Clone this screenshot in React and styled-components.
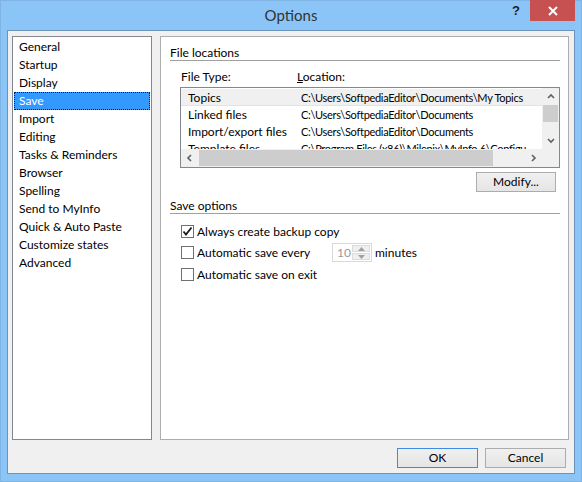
import React, { useState } from 'react';
import styled, { createGlobalStyle } from 'styled-components';

const GlobalStyle = createGlobalStyle`
    html, body {
        margin: 0;
        padding: 0;
        background: #8bc5f8;
    }
    body {
        font-family: "Segoe UI", Lato, "Liberation Sans", Arial, sans-serif;
        font-size: 12px;
        color: #000;
    }
`;

const Window = styled.div`
    width: 582px;
    height: 482px;
    box-sizing: border-box;
    background: #8bc5f8;
    border: 1px solid #7fb4e4;
    padding: 0 6px 7px 6px;
    display: flex;
    flex-direction: column;
`;

const TitleBar = styled.div`
    height: 29px;
    display: grid;
    grid-template-columns: 1fr auto 1fr;
    align-items: start;
`;

const Title = styled.div`
    grid-column: 2;
    font-size: 15px;
    color: #333;
    padding-top: 5px;
`;

const TitleButtons = styled.div`
    grid-column: 3;
    justify-self: end;
    display: flex;
    align-items: flex-start;
    margin-top: -1px;
`;

const HelpButton = styled.div`
    width: 28px;
    height: 20px;
    display: flex;
    align-items: center;
    justify-content: center;
    font-family: "Liberation Sans", Arial, sans-serif;
    font-weight: bold;
    font-size: 13px;
    color: #222;
`;

const CloseButton = styled.div`
    width: 45px;
    height: 21px;
    background: #c75050;
    display: flex;
    align-items: center;
    justify-content: center;
`;

const Client = styled.div`
    flex: 1;
    background: #f0f0f0;
    border: 1px solid #6d93bb;
    padding: 5px 5px 5px 4px;
    display: flex;
    flex-direction: column;
`;

const Body = styled.div`
    flex: 1;
    display: flex;
    gap: 8px;
`;

const NavList = styled.ul`
    list-style: none;
    margin: 0;
    width: 140px;
    box-sizing: border-box;
    background: #fff;
    border: 1px solid #828790;
    padding: 1px 1px 0 1px;
`;

const NavItem = styled.li`
    height: 18px;
    box-sizing: border-box;
    padding-left: 4px;
    line-height: 16px;
    border: 1px dotted ${(p) => (p.$active ? '#1a1a1a' : 'transparent')};
    background: ${(p) => (p.$active ? '#3399ff' : 'transparent')};
    color: ${(p) => (p.$active ? '#fff' : '#000')};
    cursor: default;
`;

const Panel = styled.div`
    flex: 1;
    background: #fff;
    border: 1px solid #adadad;
    padding: 8px 8px 0 9px;
`;

const SectionHeader = styled.div`
    height: 15px;
    line-height: 15px;
    border-bottom: 1px solid #a0a0a0;
`;

const ColumnLabels = styled.div`
    display: grid;
    grid-template-columns: 116px 1fr;
    padding: 8px 0 0 11px;
    height: 17px;
    line-height: 16px;
`;

const Underlined = styled.span`
    text-decoration: underline;
`;

const ListView = styled.div`
    margin: 1px 0 0 10px;
    width: 380px;
    height: 81px;
    box-sizing: border-box;
    border: 1px solid #828790;
    display: grid;
    grid-template-columns: 1fr 17px;
    grid-template-rows: 1fr 18px;
    overflow: hidden;
`;

const Rows = styled.div`
    overflow: hidden;
    padding-top: 1px;
`;

const Row = styled.div`
    display: grid;
    grid-template-columns: 113px 1fr;
    height: 17px;
    line-height: 17px;
    padding-left: 7px;
    white-space: nowrap;
    background: ${(p) => (p.$selected ? '#f0f0f0' : 'transparent')};
    box-shadow: ${(p) => (p.$selected ? 'inset 0 -1px 0 #e3e3e3' : 'none')};
`;

const PathCell = styled.span`
    font-size: 11px;
    letter-spacing: -0.3px;
    overflow: hidden;
`;

const VScroll = styled.div`
    background: #f0f0f0;
    display: grid;
    grid-template-rows: 17px 17px 1fr 17px;
`;

const HScroll = styled.div`
    background: #f0f0f0;
    display: grid;
    grid-template-columns: 17px 1fr 17px;
    align-items: stretch;
`;

const Corner = styled.div`
    background: #f0f0f0;
`;

const Thumb = styled.div`
    background: #cdcdcd;
    margin: ${(p) => (p.$horizontal ? '1px 32px 1px 1px' : '0 1px')};
`;

const Arrow = styled.div`
    display: flex;
    align-items: center;
    justify-content: center;
`;

const ButtonRow = styled.div`
    display: flex;
    justify-content: flex-end;
    gap: 7px;
    padding: ${(p) => p.$padding || '0'};
`;

const Button = styled.button`
    width: ${(p) => p.$width || 81}px;
    height: 20px;
    box-sizing: border-box;
    font-family: inherit;
    font-size: 12px;
    color: #000;
    border: 1px solid ${(p) => (p.$default ? '#3c8ce6' : '#acacac')};
    background: linear-gradient(#f0f0f0, #e5e5e5);
    padding: 0;
    line-height: 16px;
`;

const Options = styled.div`
    padding: 7px 0 0 11px;
    display: flex;
    flex-direction: column;
    gap: 1px;
`;

const CheckRow = styled.label`
    display: flex;
    align-items: center;
    height: 20.5px;
`;

const Box = styled.span`
    width: 13px;
    height: 13px;
    box-sizing: border-box;
    border: 1px solid #707070;
    background: #fff;
    margin-right: 3px;
    display: flex;
    align-items: center;
    justify-content: center;
`;

const CheckText = styled.span`
    width: ${(p) => (p.$width ? `${p.$width}px` : 'auto')};
`;

const Spinner = styled.div`
    width: 40px;
    height: 19px;
    box-sizing: border-box;
    border: 1px solid #d9d9d9;
    display: flex;
    margin-right: 3px;
`;

const SpinValue = styled.div`
    flex: 1;
    color: #9a9a9a;
    padding-left: 4px;
    line-height: 17px;
`;

const SpinButtons = styled.div`
    width: 18px;
    display: flex;
    flex-direction: column;
    gap: 1px;
    padding: 1px 1px 1px 0;
`;

const SpinButton = styled.div`
    flex: 1;
    background: #efefef;
    border: 1px solid #dcdcdc;
    display: flex;
    align-items: center;
    justify-content: center;
`;

const Chevron = ({ dir }) => {
    const paths = {
        up: 'M1 5 L4 2 L7 5',
        down: 'M1 2 L4 5 L7 2',
        left: 'M5 1 L2 4 L5 7',
        right: 'M2 1 L5 4 L2 7',
    };
    return (
        <svg width="8" height="8" viewBox="0 0 8 8">
            <path d={paths[dir]} fill="none" stroke="#606060" strokeWidth="1.6" />
        </svg>
    );
};

const Tri = ({ up }) => (
    <svg width="7" height="4" viewBox="0 0 7 4">
        <path d={up ? 'M0 4 L3.5 0 L7 4 Z' : 'M0 0 L3.5 4 L7 0 Z'} fill="#a0a0a0" />
    </svg>
);

const Check = ({ checked }) => (
    <Box>
        {checked && (
            <svg width="11" height="11" viewBox="0 0 11 11">
                <path d="M1.5 5.5 L4 8.5 L9.5 1.5" fill="none" stroke="#1a1a1a" strokeWidth="1.8" />
            </svg>
        )}
    </Box>
);

const navItems = [
    'General', 'Startup', 'Display', 'Save', 'Import', 'Editing',
    'Tasks & Reminders', 'Browser', 'Spelling', 'Send to MyInfo',
    'Quick & Auto Paste', 'Customize states', 'Advanced',
];

const locations = [
    ['Topics', 'C:\\Users\\SoftpediaEditor\\Documents\\My Topics'],
    ['Linked files', 'C:\\Users\\SoftpediaEditor\\Documents'],
    ['Import/export files', 'C:\\Users\\SoftpediaEditor\\Documents'],
    ['Template files', 'C:\\Program Files (x86)\\Milenix\\MyInfo 6\\Configu'],
];

const App = () => {
    const [active, setActive] = useState('Save');
    const [backup, setBackup] = useState(true);

    return (
        <>
            <GlobalStyle />
            <Window>
                <TitleBar>
                    <Title>Options</Title>
                    <TitleButtons>
                        <HelpButton>?</HelpButton>
                        <CloseButton>
                            <svg width="10" height="10" viewBox="0 0 10 10">
                                <path d="M1 1 L9 9 M9 1 L1 9" stroke="#fff" strokeWidth="2" />
                            </svg>
                        </CloseButton>
                    </TitleButtons>
                </TitleBar>
                <Client>
                    <Body>
                        <NavList>
                            {navItems.map((item) => (
                                <NavItem
                                    key={item}
                                    $active={item === active}
                                    onClick={() => setActive(item)}
                                >
                                    {item}
                                </NavItem>
                            ))}
                        </NavList>
                        <Panel>
                            <SectionHeader>File locations</SectionHeader>
                            <ColumnLabels>
                                <span>File Type:</span>
                                <span><Underlined>L</Underlined>ocation:</span>
                            </ColumnLabels>
                            <ListView>
                                <Rows>
                                    {locations.map(([type, path], i) => (
                                        <Row key={type} $selected={i === 0}>
                                            <span>{type}</span>
                                            <PathCell>{path}</PathCell>
                                        </Row>
                                    ))}
                                </Rows>
                                <VScroll>
                                    <Arrow><Chevron dir="up" /></Arrow>
                                    <Thumb />
                                    <div />
                                    <Arrow><Chevron dir="down" /></Arrow>
                                </VScroll>
                                <HScroll>
                                    <Arrow><Chevron dir="left" /></Arrow>
                                    <Thumb $horizontal />
                                    <Arrow><Chevron dir="right" /></Arrow>
                                </HScroll>
                                <Corner />
                            </ListView>
                            <ButtonRow $padding="4px 4px 6px 0">
                                <Button $width={80}>Modify...</Button>
                            </ButtonRow>
                            <SectionHeader>Save options</SectionHeader>
                            <Options>
                                <CheckRow onClick={() => setBackup(!backup)}>
                                    <Check checked={backup} />
                                    <CheckText>Always create backup copy</CheckText>
                                </CheckRow>
                                <CheckRow>
                                    <Check />
                                    <CheckText $width={135}>Automatic save every</CheckText>
                                    <Spinner>
                                        <SpinValue>10</SpinValue>
                                        <SpinButtons>
                                            <SpinButton><Tri up /></SpinButton>
                                            <SpinButton><Tri /></SpinButton>
                                        </SpinButtons>
                                    </Spinner>
                                    <span>minutes</span>
                                </CheckRow>
                                <CheckRow>
                                    <Check />
                                    <CheckText>Automatic save on exit</CheckText>
                                </CheckRow>
                            </Options>
                        </Panel>
                    </Body>
                    <ButtonRow $padding="8px 3px 0 0">
                        <Button $default>OK</Button>
                        <Button>Cancel</Button>
                    </ButtonRow>
                </Client>
            </Window>
        </>
    );
};

export default App;
